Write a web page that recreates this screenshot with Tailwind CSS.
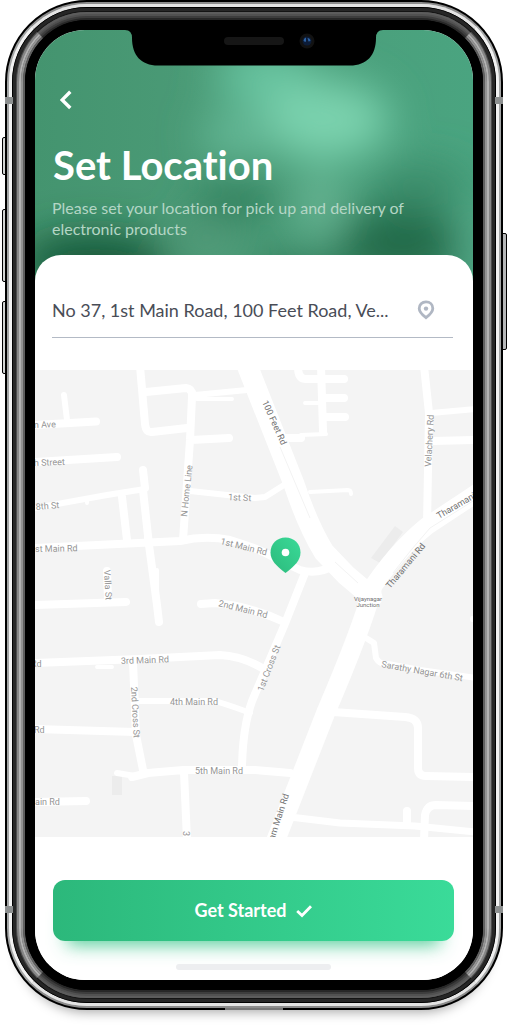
<!DOCTYPE html>
<html lang="en">
<head>
<meta charset="utf-8">
<meta name="viewport" content="width=device-width, initial-scale=1">
<title>Set Location</title>
<script src="https://cdn.jsdelivr.net/npm/@tailwindcss/browser@4"></script>
</head>
<body class="bg-white font-[Lato,sans-serif] [font-variant-ligatures:none]">
<div class="px-[5px] pb-6 overflow-hidden">
  <div class="relative isolate">
    <!-- side buttons -->
    <div class="absolute -z-10 -left-[3px] top-[137px] h-[38px] w-2 rounded-xs border border-black bg-[#d4d6d5]"></div>
    <div class="absolute -z-10 -left-[3px] top-[209px] h-[73px] w-2 rounded-xs border border-black bg-[#d4d6d5]"></div>
    <div class="absolute -z-10 -left-[3px] top-[301px] h-[73px] w-2 rounded-xs border border-black bg-[#d4d6d5]"></div>
    <div class="absolute -z-10 -right-1 top-[233px] h-[117px] w-2 rounded-xs border border-black bg-[#b5b7b8]"></div>

    <!-- device frame: concentric rings -->
    <div class="rounded-[82px] border-2 border-black bg-black shadow-[0_14px_12px_-12px_rgba(0,0,0,0.35)]">
     <div class="rounded-[80px] border-2 border-x-[#a4a6a6] border-y-[#8d8d8d] bg-[#bdbdbd]">
      <div class="rounded-[78px] border-3 border-x-[#f1f1f1] border-y-[#e4e4e4] bg-[#555]">
       <div class="rounded-[75px] border border-black bg-[#1a1a1a]">
        <div class="rounded-[74px] border-3 border-[#262626] bg-[#262626]">
         <div class="rounded-[71px] border border-x-[#4c4c4c] border-y-[#141414] bg-[#444]">
          <div class="rounded-[70px] border-2 border-x-[#868686] border-y-[#5c5c5c] bg-[#666]">
           <div class="rounded-[68px] border-2 border-x-[#b2b2b2] border-y-[#515151] bg-[#555]">
            <div class="rounded-[66px] border-2 border-x-[#939393] border-y-[#3d3d3d] bg-[#444]">
             <div class="rounded-[64px] border-2 border-x-[#5f5f5f] border-y-[#272727] bg-black">
              <div class="rounded-[62px] border-10 border-black bg-black">

    <!-- screen -->
    <main class="relative overflow-hidden rounded-[50px] bg-white">
      <header class="relative isolate h-[255px] px-[18px] pt-[59px]">
        <svg class="absolute inset-0 -z-10 h-full w-full" viewBox="35 30 438 255" preserveAspectRatio="none" aria-hidden="true">
          <defs>
            <linearGradient id="base"><stop stop-color="#44946f"/><stop offset=".4" stop-color="#4b9b77"/><stop offset="1" stop-color="#4aa480"/></linearGradient>
            <filter id="soft" x="-100%" y="-100%" width="300%" height="300%"><feGaussianBlur stdDeviation="20"/></filter>
          </defs>
          <rect x="35" y="30" width="438" height="255" fill="url(#base)"/>
          <g filter="url(#soft)">
            <ellipse cx="265" cy="75" rx="50" ry="30" fill="#66c29f"/>
            <ellipse cx="325" cy="120" rx="65" ry="40" fill="#7ad2ae"/>
            <ellipse cx="240" cy="135" rx="40" ry="25" fill="#63b795"/>
            <ellipse cx="95" cy="262" rx="75" ry="28" fill="#195639"/>
            <ellipse cx="235" cy="200" rx="42" ry="18" fill="#2c7b58"/>
            <ellipse cx="420" cy="185" rx="50" ry="22" fill="#3b8c6b"/>
            <ellipse cx="400" cy="245" rx="62" ry="38" fill="#206b4a"/>
            <ellipse cx="205" cy="240" rx="35" ry="15" fill="#559a79"/>
            <ellipse cx="320" cy="205" rx="20" ry="32" fill="#6cb796"/>
            <ellipse cx="300" cy="270" rx="50" ry="12" fill="#236b4a"/>
            <ellipse cx="480" cy="240" rx="14" ry="35" fill="#58ab8b"/>
          </g>
        </svg>
        <button type="button" aria-label="Back" class="block">
          <svg class="w-6 h-6" viewBox="0 0 24 24" fill="none" stroke="#fff" stroke-width="3.4"><path d="M17.300 2.800 9.200 10.900 17.300 19"/></svg>
        </button>
        <h1 class="mt-7 text-[40px] leading-12 font-bold text-white">Set Location</h1>
        <p class="mt-2 -ml-px text-base leading-[21px] text-[#b4d6c5]">Please set your location for pick up and delivery of electronic products</p>
      </header>

      <section class="relative -mt-[30px] rounded-t-[26px] bg-white pt-8">
        <div class="mr-5 ml-[17px] flex h-[51px] items-center gap-4 border-b border-[#b3bac5] pb-1">
          <input type="text" aria-label="Location" value="No 37, 1st Main Road, 100 Feet Road, Ve..." class="min-w-0 flex-1 text-[18px] leading-6 text-[#494d57] outline-none">
          <button type="button" aria-label="Use current location" class="mr-[18px]">
            <svg class="w-[18px] h-5" viewBox="0 0 18 20"><path d="M9 1.800c4 0 6.800 2.900 6.800 6.600 0 3.200-2.400 5.800-6.800 9.300C4.600 14.200 2.200 11.600 2.200 8.400 2.200 4.700 5 1.800 9 1.800Z" fill="none" stroke="#b0b7c3" stroke-width="2.800"/><circle cx="9" cy="8.600" r="2.200" fill="#b0b7c3"/></svg>
          </button>
        </div>

        <svg class="mt-8 block w-full" viewBox="35 370 438 467" role="img" aria-label="Street map" font-family="Roboto, sans-serif" font-size="9">
          <defs>
            <linearGradient id="pin" x1="1" y1="0" x2="0" y2="1"><stop stop-color="#3ada98"/><stop offset="1" stop-color="#2cba7c"/></linearGradient>
          </defs>
          <rect x="35" y="370" width="438" height="467" fill="#f4f4f4"/>
          <path d="M395 526 403 532 380 563 371 558ZM112 776h10v19h-10Z" fill="#ececec"/>
          <g fill="none" stroke="#fff" stroke-width="8" stroke-linejoin="round" stroke-linecap="round">
            <path d="M140 366 145 424Q146 433 152 432L187 428M146 392 186 388Q193 389 192 397L190 440 183 540M191 440 229 438"/>
            <path d="M35 425 96 421.500M35 462 117 457M143 470 145 488M122 497 127 540M143 490 149 545 157 605 159 622"/>
            <path d="M35 548 180 541Q205 535 230 540 260 549 275 558L300 570Q318 575 335 565"/>
            <path d="M107 571 108 600M35 605 126 602M201 604 215 603Q250 606 284 622M305 573 284 626 255 694Q243 720 242 767"/>
            <path d="M298 367Q298 379 306 379L344 379M321 366 323 431M322 398 344 398M323 417 345 417M287 438 301 438"/>
            <path d="M424 366 429 413 427 525M433 441 476 440"/>
            <path d="M35 663 140 659 220 655Q242 656 262 668M133 662 136 735 143 770M35 729 135 732"/>
            <path d="M132 777 148 773 183 770 255 770 290 773M184 772 187 840M35 802 86 801"/>
            <path d="M333 712 405 717Q418 718 418 728L418 768Q418 776 426 776L476 777M407 811 407 824M424 840 425 815Q427 805 436 805L476 806"/>
            <path d="M290 817 340 823 415 826 476 832" stroke-width="7"/>
            <path d="M195 395 247 390M64 395 67 420M35 508 107 495 145 489M190 491 255 498 265 497 284 485M135 701 215 701Q235 707 250 713M431 413 476 409M117 773 135 776" stroke-width="6"/>
            <path d="M366 638 374 643 376 658Q380 665 388 664L420 670 476 678" stroke-width="6"/>
            <path d="M310 492 348 490Q351 490 351 494M305 403 320 403M301 435 326 434M472 618v2M146 512v26M157 570v25M197 399h35M87 499v4M97 667h15" stroke-width="4"/>
            <path d="M245 360 294 484Q308 526 324 552L346 575 372 597" stroke-width="21"/>
            <path d="M368 594Q395 552 427 526L480 491" stroke-width="18"/>
            <path d="M372 590Q362 628 326 712L272 850" stroke-width="19"/>
          </g>
          <g fill="none" stroke="#f3f3f3" stroke-width="1"><path d="M280 447 310 518M335 562 358 583M393 573Q412 548 430 528L473 501"/></g>
          <g fill="#959595">
            <text x="34" y="428" transform="rotate(-2 34 428)">n Ave</text>
            <text x="34" y="466" transform="rotate(-2 34 466)">h Street</text>
            <text x="36" y="510" transform="rotate(-5 36 510)">8th St</text>
            <text x="35" y="552" transform="rotate(-1 35 552)">st Main Rd</text>
            <text x="31" y="667">Rd</text>
            <text x="34" y="733">Rd</text>
            <text x="35" y="805">ain Rd</text>
            <text x="228" y="500" transform="rotate(3 228 500)">1st St</text>
            <text x="220" y="544" transform="rotate(14 220 544)">1st Main Rd</text>
            <text x="218" y="606" transform="rotate(14 218 606)">2nd Main Rd</text>
            <text x="121" y="664" transform="rotate(-2 121 664)">3rd Main Rd</text>
            <text x="170" y="705">4th Main Rd</text>
            <text x="195" y="774">5th Main Rd</text>
            <text x="104" y="570" transform="rotate(87 104 570)">Valla St</text>
            <text x="131" y="687" transform="rotate(87 131 687)">2nd Cross St</text>
            <text x="187" y="517" transform="rotate(-84 187 517)">N Home Line</text>
            <text x="263" y="692" transform="rotate(-69 263 692)">1st Cross St</text>
            <text x="431" y="467" transform="rotate(-87 431 467)">Velachery Rd</text>
            <text x="381" y="667" transform="rotate(10 381 667)">Sarathy Nagar 6th St</text>
            <text x="183" y="831" transform="rotate(90 183 831)">3</text>
          </g>
          <g fill="#707070">
            <text x="262" y="402" transform="rotate(66 262 402)">100 Feet Rd</text>
            <text x="390" y="589" transform="rotate(-50 390 589)">Tharamani Rd</text>
            <text x="439" y="519" transform="rotate(-30 439 519)">Tharamani Rd</text>
            <text x="289" y="795" text-anchor="end" transform="rotate(-72 289 795)">am Main Rd</text>
            <text x="368" y="601" font-size="6" text-anchor="middle">Vijaynagar</text>
            <text x="368" y="607" font-size="6" text-anchor="middle">Junction</text>
          </g>
          <path d="M285.500 537.500c8.700 0 15 6.600 15 15 0 8-6 13.500-15 20.500-9-7-15-12.500-15-20.500 0-8.400 6.300-15 15-15Z" fill="url(#pin)"/>
          <circle cx="285.500" cy="552.500" r="3.800" fill="#fff"/>
        </svg>

        <div class="pr-[19px] pl-[18px] pt-[43px] pb-[10px]">
          <button type="button" class="flex h-[61px] w-full items-center justify-center gap-2 rounded-xl bg-linear-to-r from-[#2cb87b] to-[#3adb99] text-[18px] font-bold text-white shadow-[0_18px_18px_-14px_#2fc283d0]">
            Get Started
            <svg class="w-[18px] h-4" viewBox="0 0 18 16" fill="none" stroke="#fff" stroke-width="2.800"><path d="M2.200 8 7 12.500 16 3.200"/></svg>
          </button>
          <div class="mx-auto mt-[23px] h-[6px] w-[155px] rounded-full bg-[#edeef0]"></div>
        </div>
      </section>

      <!-- notch -->
      <svg class="absolute left-1/2 top-0 h-9 w-[258px] -translate-x-1/2" viewBox="0 0 258 36" aria-hidden="true">
        <path d="M0 0Q7 0 7 8C7 25 16 35.500 33 35.500H225C242 35.500 251 25 251 8Q251 0 258 0Z" fill="#000"/>
        <rect x="99" y="7" width="60" height="8" rx="4" fill="#161616"/>
        <circle cx="182" cy="11" r="7.500" fill="#121212"/><circle cx="182" cy="11" r="4.500" fill="#0c1c38"/><path d="M178.500 10.500q.5-2.500 2.500-3v4q-1.500 1-2.500-1ZM182.500 8q2.500 0 3 3l-2 .5Z" fill="#2d62a3"/>
      </svg>
    </main>

              </div>
             </div>
            </div>
           </div>
          </div>
         </div>
        </div>
       </div>
      </div>
     </div>
    </div>

    <!-- antenna bands -->
    <div class="absolute left-0 top-[97px] h-[7px] w-2 bg-[#8c8f8f]"></div>
    <div class="absolute right-0 top-[97px] h-[7px] w-2 bg-[#8c8f8f]"></div>
    <div class="absolute left-0 bottom-[97px] h-[7px] w-2 bg-[#8c8f8f]"></div>
    <div class="absolute right-0 bottom-[97px] h-[7px] w-2 bg-[#8c8f8f]"></div>
    <div class="absolute bottom-0 left-1/2 h-[2px] w-[58px] -translate-x-1/2 bg-[#777]"></div>
  </div>
</div>
</body>
</html>
